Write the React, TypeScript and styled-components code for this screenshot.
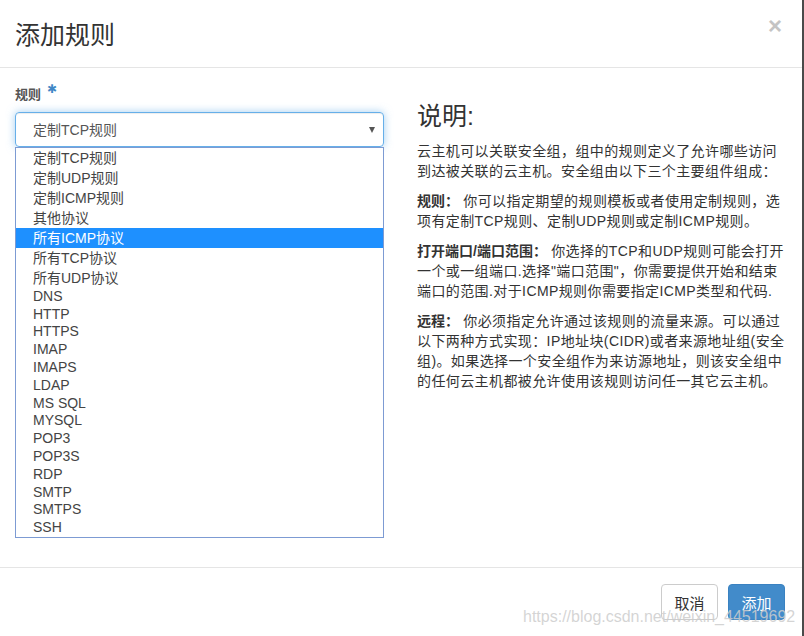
import React from "react";
import styled, { createGlobalStyle } from "styled-components";

const Global = createGlobalStyle`
  html, body { margin: 0; padding: 0; }
  body {
    background: #4a4a4a;
    font-family: "Liberation Sans", "Noto Sans CJK SC", sans-serif;
    color: #333;
    overflow: hidden;
    text-autospace: no-autospace;
  }
`;

const Modal = styled.div`
  position: relative;
  width: 802px;
  height: 636px;
  background: #fff;
  display: flex;
  flex-direction: column;
`;

const Header = styled.div`
  display: flex;
  align-items: flex-start;
  justify-content: space-between;
  height: 68px;
  box-sizing: border-box;
  padding: 16px 20px 0 15px;
  border-bottom: 1px solid #e5e5e5;
`;

const Title = styled.h3`
  margin: 0;
  font-size: 25px;
  font-weight: 400;
  line-height: 38px;
  color: #333;
`;

const Close = styled.span`
  font-family: "Liberation Sans", sans-serif;
  font-size: 24px;
  font-weight: 700;
  line-height: 16px;
  margin-top: 2px;
  color: #c4c4c4;
`;

const Body = styled.div`
  display: grid;
  grid-template-columns: 369px 1fr;
  column-gap: 33px;
  align-items: start;
  height: 502px;
  box-sizing: border-box;
  padding: 16px 15px 0 15px;
  border-bottom: 1px solid #e5e5e5;
`;

const Column = styled.div`
  display: flex;
  flex-direction: column;
`;

const Label = styled.label`
  display: flex;
  align-items: flex-start;
  gap: 6px;
  font-size: 13px;
  font-weight: 700;
  line-height: 20px;
  color: #555;
  margin-bottom: 7px;
  padding-top: 1px;
`;

const Star = styled.span`
  font-family: "DejaVu Sans", sans-serif;
  color: #3f87c6;
  font-size: 12px;
  line-height: 12px;
  margin-top: -2px;
`;

const SelectWrap = styled.div`
  position: relative;
`;

const SelectBox = styled.div`
  display: flex;
  align-items: center;
  justify-content: space-between;
  height: 35px;
  box-sizing: border-box;
  padding: 0 8px 0 17px;
  border: 1px solid #66afe9;
  border-radius: 4px;
  box-shadow: inset 0 1px 1px rgba(0, 0, 0, 0.075), 0 0 8px rgba(102, 175, 233, 0.6);
  font-size: 14px;
  color: #555;
`;

const Arrow = styled.span`
  width: 0;
  height: 0;
  border-left: 3.5px solid transparent;
  border-right: 3.5px solid transparent;
  border-top: 6px solid #555;
  margin-top: 1px;
`;

const List = styled.ul`
  position: absolute;
  top: 100%;
  left: 0;
  width: 369px;
  box-sizing: border-box;
  margin: 0;
  padding: 0;
  list-style: none;
  background: #fff;
  border: 1px solid #7d9bd3;
`;

const Item = styled.li<{ $cjk: boolean; $active?: boolean }>`
  height: ${(p) => (p.$cjk ? "20px" : "17.8px")};
  line-height: ${(p) => (p.$cjk ? "20px" : "17.8px")};
  padding-left: 17px;
  font-size: 14px;
  color: ${(p) => (p.$active ? "#fff" : "#444")};
  background: ${(p) => (p.$active ? "#1e90ff" : "transparent")};
  white-space: nowrap;
`;

const Heading = styled.h3`
  margin: 19px 0 11px;
  font-size: 25px;
  font-weight: 400;
  line-height: 27px;
  color: #333;
`;

const Para = styled.p`
  margin: 0 0 10px;
  font-size: 14px;
  letter-spacing: 0.4px;
  line-height: 20px;
  color: #333;
`;

const Strong = styled.strong`
  font-weight: 700;
  letter-spacing: 0;
`;

const Footer = styled.div`
  display: flex;
  justify-content: flex-end;
  gap: 10px;
  padding: 16px 17px;
`;

const Button = styled.button<{ $primary?: boolean }>`
  width: 57px;
  height: 36px;
  box-sizing: border-box;
  border-radius: 4px;
  font-family: "Liberation Sans", "Noto Sans CJK SC", sans-serif;
  font-size: 15px;
  border: 1px solid ${(p) => (p.$primary ? "#3a82c1" : "#ccc")};
  background: ${(p) => (p.$primary ? "#428bca" : "#fff")};
  color: ${(p) => (p.$primary ? "#fff" : "#333")};
  padding: 0;
`;

const Watermark = styled.div`
  position: absolute;
  left: 523px;
  top: 608px;
  font-family: "Liberation Sans", sans-serif;
  font-size: 16px;
  line-height: 18px;
  color: rgba(205, 205, 205, 0.85);
  pointer-events: none;
  white-space: nowrap;
`;

const options: { label: string; cjk: boolean; active?: boolean }[] = [
  { label: "定制TCP规则", cjk: true },
  { label: "定制UDP规则", cjk: true },
  { label: "定制ICMP规则", cjk: true },
  { label: "其他协议", cjk: true },
  { label: "所有ICMP协议", cjk: true, active: true },
  { label: "所有TCP协议", cjk: true },
  { label: "所有UDP协议", cjk: true },
  { label: "DNS", cjk: false },
  { label: "HTTP", cjk: false },
  { label: "HTTPS", cjk: false },
  { label: "IMAP", cjk: false },
  { label: "IMAPS", cjk: false },
  { label: "LDAP", cjk: false },
  { label: "MS SQL", cjk: false },
  { label: "MYSQL", cjk: false },
  { label: "POP3", cjk: false },
  { label: "POP3S", cjk: false },
  { label: "RDP", cjk: false },
  { label: "SMTP", cjk: false },
  { label: "SMTPS", cjk: false },
  { label: "SSH", cjk: false },
];

export default function App() {
  return (
    <>
      <Global />
      <Modal>
        <Header>
          <Title>添加规则</Title>
          <Close>×</Close>
        </Header>
        <Body>
          <Column>
            <Label>
              规则 <Star>✱</Star>
            </Label>
            <SelectWrap>
              <SelectBox>
                <span>定制TCP规则</span>
                <Arrow />
              </SelectBox>
              <List>
                {options.map((o) => (
                  <Item key={o.label} $cjk={o.cjk} $active={o.active}>
                    {o.label}
                  </Item>
                ))}
              </List>
            </SelectWrap>
          </Column>
          <Column>
            <Heading>说明:</Heading>
            <Para>
              云主机可以关联安全组，组中的规则定义了允许哪些访问到达被关联的云主机。安全组由以下三个主要组件组成：
            </Para>
            <Para>
              <Strong>规则：</Strong> 你可以指定期望的规则模板或者使用定制规则，选项有定制TCP规则、定制UDP规则或定制ICMP规则。
            </Para>
            <Para>
              <Strong>打开端口/端口范围：</Strong> 你选择的TCP和UDP规则可能会打开一个或一组端口.选择"端口范围"，你需要提供开始和结束端口的范围.对于ICMP规则你需要指定ICMP类型和代码.
            </Para>
            <Para>
              <Strong>远程：</Strong> 你必须指定允许通过该规则的流量来源。可以通过以下两种方式实现：IP地址块(CIDR)或者来源地址组(安全组)。如果选择一个安全组作为来访源地址，则该安全组中的任何云主机都被允许使用该规则访问任一其它云主机。
            </Para>
          </Column>
        </Body>
        <Footer>
          <Button>取消</Button>
          <Button $primary>添加</Button>
        </Footer>
        <Watermark>https://blog.csdn.net/weixin_44519692</Watermark>
      </Modal>
    </>
  );
}
